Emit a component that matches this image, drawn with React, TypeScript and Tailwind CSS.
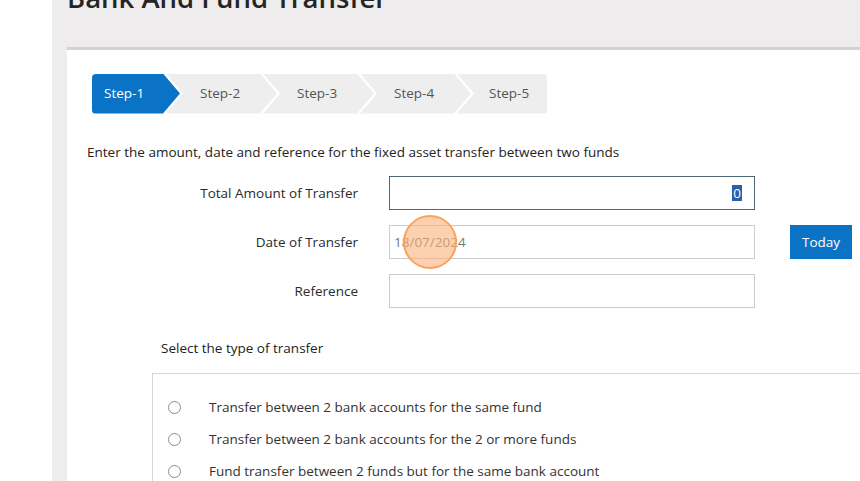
import React from "react";

const steps = ["Step-1", "Step-2", "Step-3", "Step-4", "Step-5"];

function Stepper() {
  return (
    <div className="flex h-[40px] ml-[25px] mt-[24px]">
      <div className="h-full w-[88px] bg-[#0b73c6] text-white rounded-l-[4px] flex items-center pl-[12px] [clip-path:polygon(0_0,71px_0,88px_50%,71px_100%,0_100%)]">
        Step-1
      </div>
      {steps.slice(1, 4).map((s) => (
        <div
          key={s}
          className="h-full w-[111px] -ml-[14px] bg-[#eeeeee] text-[#555] flex items-center pl-[34px] [clip-path:polygon(0_0,94px_0,111px_50%,94px_100%,0_100%,17px_50%)]"
        >
          {s}
        </div>
      ))}
      <div className="h-full w-[90px] -ml-[14px] bg-[#eeeeee] text-[#555] rounded-r-[4px] flex items-center pl-[32px] [clip-path:polygon(0_0,100%_0,100%_100%,0_100%,17px_50%)]">
        Step-5
      </div>
    </div>
  );
}

function Row({ label, children }: { label: string; children: React.ReactNode }) {
  return (
    <div className="flex items-center h-[34px]">
      <div className="w-[291px] text-right text-[#2a2a2a] pr-0">{label}</div>
      <div className="ml-[31px] flex items-center">{children}</div>
    </div>
  );
}

export default function App() {
  return (
    <div
      className="w-[860px] h-[481px] overflow-hidden bg-white flex text-[13.5px]"
      style={{ fontFamily: '"Open Sans", "Noto Sans", sans-serif' }}
    >
      <div className="w-[52px] shrink-0 bg-white" />
      <div className="flex-1 bg-[#eeecec] flex flex-col pl-[15px]">
        <h1 className="text-[27.5px] leading-[28px] font-semibold text-[#252525] -mt-[16px] h-[63px] whitespace-nowrap">
          Bank And Fund Transfer
        </h1>
        <div className="flex-1 bg-white border-t-[3px] border-[#d2d3d7] flex flex-col">
          <Stepper />
          <p className="ml-[20px] mt-[28px] text-[#222] whitespace-nowrap">
            Enter the amount, date and reference for the fixed asset transfer between two funds
          </p>
          <div className="flex flex-col gap-[15px] mt-[14px]">
            <Row label="Total Amount of Transfer">
              <div className="w-[366px] h-[34px] border border-[#4e6a76] flex items-center justify-end pr-[12px]">
                <span className="bg-[#2d5ea8] text-white leading-[16px] px-[1px]">0</span>
              </div>
            </Row>
            <Row label="Date of Transfer">
              <div className="relative w-[366px] h-[34px] border border-[#cccccc] flex items-center pl-[4px] text-[#777]">
                18/07/2024
                <div className="absolute left-[13px] top-[-11px] w-[54px] h-[54px] rounded-full bg-[#fbb27a]/60 border-2 border-[#f8a45e]" />
              </div>
              <button className="ml-[35px] w-[62px] h-[34px] bg-[#0b73c6] text-white">Today</button>
            </Row>
            <Row label="Reference">
              <div className="w-[366px] h-[34px] border border-[#cccccc]" />
            </Row>
          </div>
          <p className="ml-[94px] mt-[30px] text-[#222]">Select the type of transfer</p>
          <div className="ml-[85px] mt-[15px] flex-1 border-l border-t border-[#d6d6d6] pt-[23px] flex flex-col gap-[12px]">
            {[
              "Transfer between 2 bank accounts for the same fund",
              "Transfer between 2 bank accounts for the 2 or more funds",
              "Fund transfer between 2 funds but for the same bank account",
            ].map((t) => (
              <div key={t} className="flex items-center h-[20px] text-[#333]">
                <span className="ml-[15px] w-[13px] h-[13px] rounded-full border border-[#8a8a8a]" />
                <span className="ml-[28px]">{t}</span>
              </div>
            ))}
          </div>
        </div>
      </div>
    </div>
  );
}
